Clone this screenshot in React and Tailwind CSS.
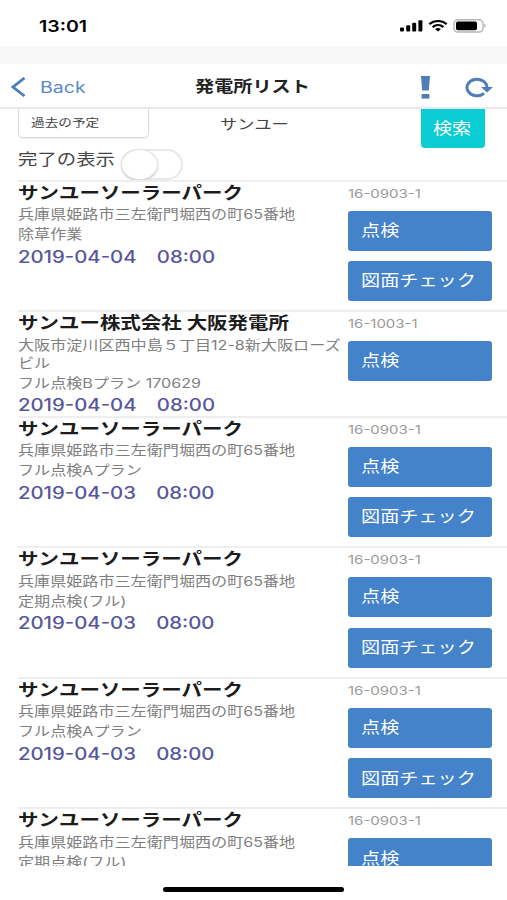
import { clsx } from 'clsx'

const plants = [
  {
    name: 'サンユーソーラーパーク',
    address: ['兵庫県姫路市三左衛門堀西の町65番地'],
    plan: '除草作業',
    date: '2019-04-04',
    code: '16-0903-1',
    actions: ['点検', '図面チェック'],
  },
  {
    name: 'サンユー株式会社 大阪発電所',
    address: ['大阪市淀川区西中島５丁目12-8新大阪ローズ', 'ビル'],
    plan: 'フル点検Bプラン 170629',
    date: '2019-04-04',
    code: '16-1003-1',
    actions: ['点検'],
  },
  {
    name: 'サンユーソーラーパーク',
    address: ['兵庫県姫路市三左衛門堀西の町65番地'],
    plan: 'フル点検Aプラン',
    date: '2019-04-03',
    code: '16-0903-1',
    actions: ['点検', '図面チェック'],
  },
  {
    name: 'サンユーソーラーパーク',
    address: ['兵庫県姫路市三左衛門堀西の町65番地'],
    plan: '定期点検(フル)',
    date: '2019-04-03',
    code: '16-0903-1',
    actions: ['点検', '図面チェック'],
  },
  {
    name: 'サンユーソーラーパーク',
    address: ['兵庫県姫路市三左衛門堀西の町65番地'],
    plan: 'フル点検Aプラン',
    date: '2019-04-03',
    code: '16-0903-1',
    actions: ['点検', '図面チェック'],
  },
  {
    name: 'サンユーソーラーパーク',
    address: ['兵庫県姫路市三左衛門堀西の町65番地'],
    plan: '定期点検(フル)',
    date: '2019-04-03',
    code: '16-0903-1',
    actions: ['点検', '図面チェック'],
  },
]

// Extended lettering, anchored on its left edge
const Wide = ({ children, className }) => (
  <span className={clsx('block w-max origin-left scale-x-[1.22] whitespace-nowrap', className)}>
    {children}
  </span>
)

const StatusBar = () => (
  <div className="flex h-[46px] shrink-0 items-center pt-[5px] pl-[39px] pr-[20px] text-black">
    <Wide className="text-[16px] font-semibold">13:01</Wide>
    <svg className="ml-auto" width="88" height="14" viewBox="0 0 88 14">
      <rect x="1" y="8.5" width="4" height="4" rx="1" />
      <rect x="7.2" y="6.3" width="4" height="6.2" rx="1" />
      <rect x="13.2" y="3.8" width="4" height="8.7" rx="1" />
      <rect x="19.4" y="1.2" width="4" height="11.3" rx="1" />
      <g fill="none" stroke="black" strokeWidth="2.2">
        <path d="M30.3 5.2C35.2 .9 42.8 .9 47.7 5.2" />
        <path d="M33.6 8.1C36.8 5.4 41.2 5.4 44.4 8.1" />
      </g>
      <path d="M36 10C37.8 8.6 40.2 8.6 42 10L39 12.6Z" />
      <rect x="55" y="0.8" width="29" height="12.2" rx="3.8" fill="white" stroke="#b5b5b5" strokeWidth="1.4" />
      <rect x="57" y="2.6" width="21" height="8.6" rx="1.8" />
      <path d="M85.3 4.8C87.2 5.4 87.2 8.2 85.3 8.8Z" fill="#b5b5b5" />
    </svg>
  </div>
)

const NavBar = () => (
  <div className="flex h-[45px] shrink-0 items-center border-b-2 border-[#e8e8e8] pt-[3px] pl-[11px] pr-[14px]">
    <svg width="15" height="20" viewBox="0 0 15 20" fill="none" stroke="#4a7fbd" strokeWidth="2.8">
      <path d="M13.5 1L2 10L13.5 19" />
    </svg>
    <Wide className="ml-[14px] text-[16px] text-[#5a8ac4]">Back</Wide>
    <Wide className="ml-[118px] text-[15.7px] font-bold text-[#222]">発電所リスト</Wide>
    <svg className="ml-auto" width="9" height="23" viewBox="0 0 9 23" fill="#4f7db8">
      <path d="M0 0H9L7.8 14.5H1.2Z" />
      <rect x="0.6" y="18" width="7.8" height="4.6" />
    </svg>
    <svg className="ml-[35px]" width="28" height="21" viewBox="0 0 28 21">
      <path
        d="M19.07 16.37A10 8.3 0 1 1 22 10.5"
        fill="none"
        stroke="#4f7db8"
        strokeWidth="3"
      />
      <path d="M16 10H28L22 15.6Z" fill="#4f7db8" />
    </svg>
  </div>
)

const Filters = () => (
  <div className="h-[70.5px] shrink-0 pl-[18px]">
    <div className="flex h-[39px] items-start">
      <div className="h-[29px] w-[131px] rounded-b-[5px] border border-t-0 border-[#d9d9d9] pl-[12px] shadow-[0_1px_1px_#eeeeee]">
        <Wide className="text-[11.2px] leading-[28px] text-[#444]">過去の予定</Wide>
      </div>
      <Wide className="ml-[71px] text-[14.1px] leading-[29px] text-[#444]">サンユー</Wide>
      <button className="ml-auto mr-[22px] h-[39px] w-[64px] rounded-b-[4px] bg-[#0bccd2] pl-[12px] text-white">
        <Wide className="text-[15.6px]">検索</Wide>
      </button>
    </div>
    <div className="flex h-[31.5px]">
      <div className="w-[103px] shrink-0">
        <Wide className="text-[15.9px] leading-[23px] text-[#444]">完了の表示</Wide>
      </div>
      <div className="mt-px h-[31px] w-[62px] rounded-full border-2 border-[#e9e9e9] bg-white">
        <div className="-mt-[2px] -ml-[2px] h-[31px] w-[37px] rounded-[50%] border border-[#e2e2e2] bg-white shadow-[0_1px_2px_#cccccc]" />
      </div>
    </div>
  </div>
)

const Plant = ({ plant }) => (
  <li className="ml-[18px] flex shrink-0 border-t-2 border-[#eeeeee]">
    <div className="w-[330px]">
      <Wide className="text-[16.8px] font-bold leading-[22px] text-[#1c1c1c]">{plant.name}</Wide>
      <div className="mt-[1.5px] text-[13.2px] leading-[18px] text-[#808080]">
        {plant.address.map((line) => (
          <Wide key={line}>{line}</Wide>
        ))}
        <Wide className="mt-[2px]">{plant.plan}</Wide>
      </div>
      <Wide className="mt-[4.5px] text-[16.65px] font-medium leading-[19.5px] text-[#57579b]">
        {plant.date}　{'08:00'}
      </Wide>
    </div>
    <div className="w-[144px]">
      <Wide className="mt-[2px] text-[12.3px] leading-[20px] text-[#9b9b9b]">{plant.code}</Wide>
      <div className="mt-[7px] mb-[9px] flex flex-col gap-[10.6px]">
        {plant.actions.map((action) => (
          <button key={action} className="h-[40px] rounded-[3px] bg-[#4482ca] pl-[13px] text-white">
            <Wide className="text-[15.7px]">{action}</Wide>
          </button>
        ))}
      </div>
    </div>
  </li>
)

export default function App() {
  return (
    <div className="flex h-[900px] w-[507px] flex-col overflow-hidden bg-white font-['Inter','Noto_Sans_CJK_JP',sans-serif]">
      <StatusBar />
      <div className="h-[18px] shrink-0 bg-[#f8f8f8]" />
      <NavBar />
      <main className="flex h-[757px] shrink-0 flex-col overflow-hidden">
        <Filters />
        <ul className="flex flex-col">
          {plants.map((plant, i) => (
            <Plant key={i} plant={plant} />
          ))}
        </ul>
      </main>
      <div className="mx-auto mt-[21px] h-[5px] w-[181px] shrink-0 rounded-full bg-black" />
    </div>
  )
}
